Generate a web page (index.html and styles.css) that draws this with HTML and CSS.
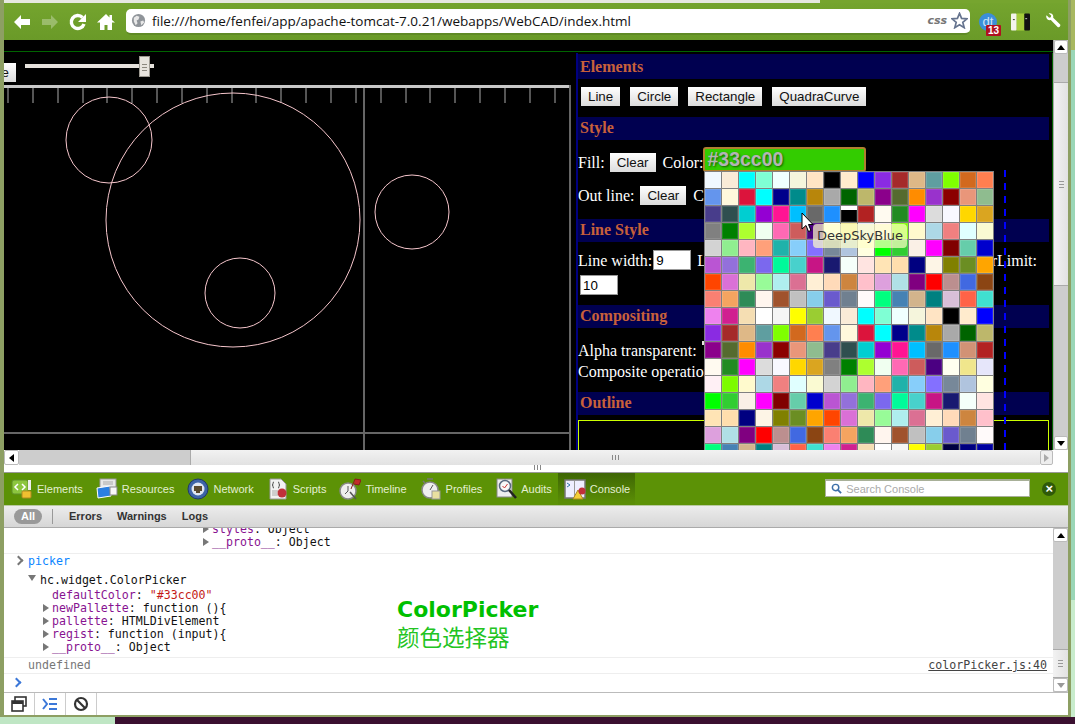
FILE: index.html
```html
<!DOCTYPE html>
<html>
<head>
    <title>WebCAD</title>
    <link rel="stylesheet" href="styles.css">
</head>
<body>
<div class="desktop">
<div class="window">
    <div class="tabstrip"></div>
    <div class="toolbar">
        <svg class="nav-icon" viewBox="0 0 20 20"><path d="M9 3 2 10l7 7v-4h9V7H9z" fill="#fff"/></svg>
        <svg class="nav-icon is-faded" viewBox="0 0 20 20"><path d="M11 3l7 7-7 7v-4H2V7h9z" fill="#fff"/></svg>
        <svg class="nav-icon" viewBox="0 0 20 20"><path d="M16 12a6.500 6.500 0 1 1-1.500-6.500" fill="none" stroke="#fff" stroke-width="3.400"/><path d="M18 2v8h-8z" fill="#fff"/></svg>
        <svg class="nav-icon" viewBox="0 0 20 20"><path d="M10 2 1 10.500h3V18h4.500v-5h3v5H16v-7.500h3L16 8V3h-2.500v2.500z" fill="#fff"/></svg>
        <div class="omnibox">
            <svg class="globe" viewBox="0 0 16 16"><circle cx="8" cy="8" r="7" fill="#8f9499"/><path d="M3 5l3-2 3 1-1 3-2 1 1 3-2 2-2-4zM10 9l3-1 1 2-3 3z" fill="#e8e8e8"/></svg>
            <span class="url">file:///home/fenfei/app/apache-tomcat-7.0.21/webapps/WebCAD/index.html</span>
            <span class="css-badge">css</span>
            <svg class="star" viewBox="0 0 18 18"><path d="M9 1.500 11.200 6.800 17 7.200 12.500 11 14 16.600 9 13.600 4 16.600 5.500 11 1 7.200 6.800 6.800z" fill="#fff" stroke="#66748f" stroke-width="1.800"/></svg>
        </div>
        <div class="ext-dt"><span class="dt-text">dt</span><span class="dt-badge">13</span></div>
        <svg class="ext-card" viewBox="0 0 20 20"><rect x="0" y="1" width="6" height="18" rx="1" fill="#f4f4ec"/><rect x="6" y="1" width="8" height="18" fill="#a4cc3a"/><rect x="14" y="1" width="6" height="18" rx="1" fill="#111"/><rect x="2" y="7" width="2" height="1" fill="#333"/><rect x="15" y="6" width="2" height="1" fill="#ccc"/></svg>
        <svg class="wrench" viewBox="0 0 20 20"><path d="M3 2.500 6 5.500l2-.5.500-2L5.500.5C9-.5 11.500 2 10.800 5.500L19 13.500c1 1.500-1.500 4-3 3L8 8.300C4.500 9 1.500 6 3 2.500z" fill="#fff"/></svg>
    </div>

    <div class="viewport">
        <div class="page">
            <div class="page-top"></div>
            <div class="page-body">
                <div class="drawing">
                    <div class="slider-row">
                        <button class="btn btn-cut">Save</button>
                        <div class="slider"><div class="slider-thumb"></div></div>
                    </div>
                    <svg class="canvas" id="canvas" width="568" height="365" viewBox="0 85 568 365"></svg>
                </div>
                <div class="panel">
                    <h3 class="head head-first">Elements</h3>
                    <div class="row row-tools">
                        <button class="btn">Line</button>
                        <button class="btn">Circle</button>
                        <button class="btn">Rectangle</button>
                        <button class="btn">QuadraCurve</button>
                    </div>
                    <h3 class="head head-style">Style</h3>
                    <div class="row row-fill">
                        <span class="fill-label">Fill:</span><button class="btn">Clear</button><span>Color:</span>
                        <input class="color-input" type="text" value="#33cc00">
                    </div>
                    <div class="row row-outline">
                        <span class="outline-label">Out line:</span><button class="btn">Clear</button><span>Color:</span>
                    </div>
                    <h3 class="head head-line">Line Style</h3>
                    <div class="row row-width">
                        <span>Line width:</span><input class="num-input" type="text" value="9">
                        <span>Line cap:</span><span class="miter">MiterLimit:</span>
                    </div>
                    <div class="row row-miter"><input class="num-input" type="text" value="10"></div>
                    <h3 class="head head-comp">Compositing</h3>
                    <div class="text-row text-row-first">Alpha transparent: <span class="alpha-bit"></span></div>
                    <div class="text-row">Composite operation:</div>
                    <h3 class="head head-outline">Outline</h3>
                    <div class="outline-box"></div>
                </div>
            </div>
            <div class="dash-line"></div>
            <div class="palette" id="palette"></div>
            <svg class="cursor" viewBox="0 0 13 21"><path d="M1 1v16l4-3.500 2.500 6 2.500-1-2.500-6H12z" fill="#fff" stroke="#000"/></svg>
            <div class="tip">DeepSkyBlue</div>
        </div>
        <div class="vscroll">
            <div class="sb-btn"><i class="arrow-up"></i></div>
            <div class="sb-track sb-top"></div>
            <div class="sb-thumb"><i class="grip"></i></div>
            <div class="sb-track sb-fill"></div>
            <div class="sb-btn"><i class="arrow-down"></i></div>
        </div>
    </div>

    <div class="hscroll">
        <div class="hs-btn"><i class="arrow-left"></i></div>
        <div class="hs-track"></div>
        <div class="hs-thumb"><i class="hgrip"></i></div>
        <div class="hs-btn hs-end"><i class="arrow-right"></i></div>
    </div>
    <div class="resizer"><i class="hgrip"></i></div>

    <div class="dev-tabs">
        <div class="tab"><svg viewBox="0 0 22 22"><rect x="1" y="2" width="16" height="14" rx="2" fill="#8cc63f" stroke="#5f8f2a"/><path d="M7 6 4 9l3 3M11 6l3 3-3 3" fill="none" stroke="#fff" stroke-width="1.500"/><rect x="17" y="2" width="3" height="10" fill="#eee"/><rect x="11" y="13" width="9" height="7" rx="1" fill="#f0c030" stroke="#b08a20"/></svg><span>Elements</span></div>
        <div class="tab"><svg viewBox="0 0 22 22"><rect x="4" y="1" width="16" height="13" fill="#e8e8e8" stroke="#999"/><path d="M7 4h10M7 6h10" stroke="#aaa"/><path d="M1 10l13-2 1 10-13 2z" fill="#2b7fe0" stroke="#fff"/><rect x="14" y="9" width="7" height="8" fill="#f8f8f8" stroke="#888"/></svg><span>Resources</span></div>
        <div class="tab"><svg viewBox="0 0 22 22"><circle cx="11" cy="11" r="10" fill="#3d64a8" stroke="#22386a"/><circle cx="11" cy="11" r="6.500" fill="#dfe6f2"/><path d="M7 8h8v5h-2v2H9v-2H7z" fill="#5a4a30"/></svg><span>Network</span></div>
        <div class="tab"><svg viewBox="0 0 22 22"><path d="M3 1h11l5 5v15H3z" fill="#f2f2f2" stroke="#999"/><path d="M7 4C5 4 7 7 5 7c2 0 0 3 2 3M11 4c2 0 0 3 2 3-2 0 0 3-2 3" fill="none" stroke="#444"/><path d="M5 13h6M5 15h5M5 17h6" stroke="#aaa"/><circle cx="15" cy="15" r="4.500" fill="#c0313a"/></svg><span>Scripts</span></div>
        <div class="tab"><svg viewBox="0 0 22 22"><circle cx="9" cy="13" r="8" fill="#eee" stroke="#888" stroke-width="1.500"/><path d="M9 8v5l-3 3" fill="none" stroke="#555"/><path d="M12 11 16 1M16 1l6 1-2 5-5-1" fill="#c22a2a" stroke="#8a1b1b"/><path d="M11 14l6 7" stroke="#555" stroke-width="1.500"/></svg><span>Timeline</span></div>
        <div class="tab"><svg viewBox="0 0 22 22"><circle cx="10" cy="12" r="8" fill="#efefef" stroke="#888" stroke-width="1.500"/><path d="M10 12 13 7" stroke="#555"/><path d="M7 1h6M3 3l2 2" stroke="#777" stroke-width="1.500"/><rect x="12" y="13" width="8" height="8" fill="#e8e0a0" stroke="#999"/></svg><span>Profiles</span></div>
        <div class="tab"><svg viewBox="0 0 22 22"><rect x="2" y="1" width="15" height="18" fill="#eee" stroke="#888"/><circle cx="10" cy="8" r="5.500" fill="#f8f8f8" stroke="#5a6a80" stroke-width="1.500"/><path d="M7.500 8l2 2 3-4" fill="none" stroke="#c33"/><path d="M14 12l7 8" stroke="#222" stroke-width="2.500"/></svg><span>Audits</span></div>
        <div class="tab tab-active"><svg viewBox="0 0 22 22"><rect x="1" y="2" width="20" height="18" fill="#eef" stroke="#777" stroke-width="1.500"/><path d="M3 5l3 2-3 2" fill="none" stroke="#37a"/><rect x="10" y="3" width="1" height="16" fill="#999"/><path d="M9 21l5-9 5 9z" fill="#f4cf3a" stroke="#b08a20"/><circle cx="18" cy="13" r="3.500" fill="#c0313a"/></svg><span>Console</span></div>
        <div class="search">
            <svg viewBox="0 0 12 12"><circle cx="5" cy="5" r="3.500" fill="none" stroke="#3c6fa8" stroke-width="1.600"/><path d="M7.500 7.500 11 11" stroke="#3c6fa8" stroke-width="2"/></svg>
            <span>Search Console</span>
        </div>
        <div class="dev-close">×</div>
    </div>

    <div class="dev-filter">
        <span class="pill">All</span>
        <span class="filter-sep"></span>
        <span class="filter">Errors</span>
        <span class="filter">Warnings</span>
        <span class="filter">Logs</span>
    </div>

    <div class="dev-console">
        <div class="log">
            <div class="msg msg-clip">
                <div class="prop closed"><span class="key">styles</span>: Object</div>
                <div class="prop closed"><span class="key">__proto__</span>: Object</div>
            </div>
            <div class="msg msg-object">
                <div class="input-line">picker</div>
                <div class="object-title">hc.widget.ColorPicker</div>
                <div class="member"><span class="key">defaultColor</span>: <span class="str">"#33cc00"</span></div>
                <div class="member closed"><span class="key">newPallette</span>: function (){</div>
                <div class="member closed"><span class="key">pallette</span>: HTMLDivElement</div>
                <div class="member closed"><span class="key">regist</span>: function (input){</div>
                <div class="member closed"><span class="key">__proto__</span>: Object</div>
                <div class="note">
                    <div class="note-title">ColorPicker</div>
                    <div class="note-sub">颜色选择器</div>
                </div>
            </div>
            <div class="msg msg-result">
                <span>undefined</span>
                <span class="src-link">colorPicker.js:40</span>
            </div>
            <div class="prompt"></div>
        </div>
        <div class="vscroll vscroll-dev">
            <div class="sb-btn"><i class="arrow-up"></i></div>
            <div class="sb-track sb-fill"></div>
            <div class="sb-thumb sb-thumb-dev"><i class="grip"></i></div>
            <div class="sb-btn"><i class="arrow-down arrow-light"></i></div>
        </div>
    </div>

    <div class="dev-status">
        <div class="status-btn"><svg viewBox="0 0 16 16"><rect x="4" y="1" width="11" height="9" fill="none" stroke="#333" stroke-width="1.600"/><rect x="1" y="5" width="11" height="10" fill="#fff" stroke="#333" stroke-width="1.600"/><rect x="1" y="5" width="11" height="3" fill="#333"/></svg></div>
        <div class="status-btn"><svg viewBox="0 0 16 16"><path d="M1 3l4 5-4 5" fill="none" stroke="#3c78d8" stroke-width="2"/><path d="M7 3h8M7 8h8M7 13h8" stroke="#3c78d8" stroke-width="2"/></svg></div>
        <div class="status-btn"><svg viewBox="0 0 16 16"><circle cx="8" cy="8" r="6" fill="none" stroke="#333" stroke-width="2.200"/><path d="M3.800 3.800l8.400 8.400" stroke="#333" stroke-width="2.200"/></svg></div>
    </div>
</div>
<div class="desktop-foot"><div class="foot-mint"></div><div class="foot-plum"></div></div>
</div>

<script>
var names = [
  'aliceblue','antiquewhite','aqua','aquamarine','azure','beige','bisque','black','blanchedalmond','blue','blueviolet','brown','burlywood','cadetblue','chartreuse','chocolate','coral',
  'cornflowerblue','cornsilk','crimson','cyan','darkblue','darkcyan','darkgoldenrod','darkgray','darkgreen','darkkhaki','darkmagenta','darkolivegreen','darkorange','darkorchid','darkred','darksalmon','darkseagreen',
  'darkslateblue','darkslategray','darkturquoise','darkviolet','deeppink','deepskyblue','dimgray','dodgerblue','#d19275','firebrick','floralwhite','forestgreen','fuchsia','gainsboro','ghostwhite','gold','goldenrod',
  'gray','green','greenyellow','honeydew','hotpink','indianred','indigo','ivory','khaki','lavender','lavenderblush','lawngreen','lemonchiffon','lightblue','lightcoral','lightcyan','lightgoldenrodyellow',
  'lightgray','lightgreen','lightpink','lightsalmon','lightseagreen','lightskyblue','#8470ff','lightslategray','lightsteelblue','lightyellow','lime','limegreen','linen','magenta','maroon','mediumaquamarine','mediumblue',
  'mediumorchid','mediumpurple','mediumseagreen','mediumslateblue','mediumspringgreen','mediumturquoise','mediumvioletred','midnightblue','mintcream','mistyrose','moccasin','navajowhite','navy','oldlace','olive','olivedrab','orange',
  'orangered','orchid','palegoldenrod','palegreen','paleturquoise','palevioletred','papayawhip','peachpuff','peru','pink','plum','powderblue','purple','red','rosybrown','royalblue','saddlebrown',
  'salmon','sandybrown','seagreen','seashell','sienna','silver','skyblue','slateblue','slategray','snow','springgreen','steelblue','tan','teal','thistle','tomato','turquoise',
  'violet','#d02090','wheat','white','whitesmoke','yellow','yellowgreen'
];
var palette = document.getElementById('palette');
var colors = names.concat(names, ['#000040', '#000080', '#0000a0']);
colors.forEach(function(color, i) {
  var cell = document.createElement('div');
  cell.className = 'cell';
  cell.style.backgroundColor = color;
  // this one is drawn half hidden in the shot
  if (i === 42) cell.className = 'cell cell-odd';
  palette.appendChild(cell);
});

// ruler and shapes
var svgNS = 'http://www.w3.org/2000/svg';
var canvas = document.getElementById('canvas');
function add(tag, attrs) {
  var el = document.createElementNS(svgNS, tag);
  for (var k in attrs) el.setAttribute(k, attrs[k]);
  canvas.appendChild(el);
}
add('rect', {x: 0, y: 85, width: 566, height: 3, fill: '#c8c8c8'});
for (var x = 3; x < 566; x += 24.85) {
  add('rect', {x: Math.round(x), y: 88, width: 2, height: 15, fill: '#555'});
}
add('rect', {x: 359, y: 88, width: 2, height: 362, fill: '#666'});
add('rect', {x: 0, y: 432, width: 566, height: 2, fill: '#666'});
add('rect', {x: 565, y: 85, width: 2, height: 365, fill: '#666'});
var circles = [[105, 140, 43], [229, 220, 127], [408, 212, 37], [236, 293, 35]];
circles.forEach(function(c) {
  add('circle', {cx: c[0], cy: c[1], r: c[2], fill: 'none', stroke: '#f6c6cc', 'stroke-width': 1});
});
</script>
</body>
</html>
```

FILE: styles.css
```css
* { box-sizing: border-box; }

body {
    margin: 0;
    background: #3a1030;
    font-family: "Liberation Sans", Arial, sans-serif;
    overflow: hidden;
}

button { font-family: "Liberation Sans", Arial, sans-serif; }

.desktop {
    width: 1075px;
    height: 724px;
    background: linear-gradient(#a8b860 0, #a8b860 50px, #9ad6b6 50px, #9ad6b6 600px, #c8eccc 600px);
}

.window {
    width: 1071px;
    height: 717px;
    display: flex;
    flex-direction: column;
    background: #fff;
    border-left: 4px solid #8d9f63;
    border-right: 3px solid #8d9f63;
    border-bottom: 2px solid #8d9f63;
}

.desktop-foot { display: flex; height: 7px; }
.foot-mint { width: 115px; background: #bfe6c4; }
.foot-plum { flex: 1; background: #3a1030; }

/* browser toolbar */
.tabstrip {
    height: 3px;
    background: linear-gradient(90deg, #e6e8e0 0, #e6e8e0 816px, #76a52f 816px);
}

.toolbar {
    height: 37px;
    display: flex;
    align-items: center;
    padding-left: 8px;
    background: linear-gradient(#74a42e, #6a9a28);
}

.nav-icon { width: 20px; height: 20px; margin-right: 8px; flex: none; }
.nav-icon.is-faded { opacity: .3; }

.omnibox {
    width: 844px;
    height: 26px;
    margin-left: 2px;
    display: flex;
    align-items: center;
    padding: 0 2px 0 5px;
    background: #fff;
    border-radius: 5px;
    border-bottom: 2px solid #5f8a25;
}

.globe { width: 15px; height: 15px; margin-right: 6px; flex: none; }
.url { font-family: "Open Sans", sans-serif; font-size: 13.500px; color: #111; flex: 1; white-space: nowrap; }
.css-badge { font-family: "DejaVu Sans", sans-serif; font-size: 11px; font-style: italic; font-weight: bold; color: #777; margin-right: 4px; }
.star { width: 17px; height: 17px; flex: none; }

.ext-dt { position: relative; width: 18px; height: 18px; margin-left: 9px; border-radius: 50%; background: #3c8ed8; flex: none; }
.dt-text { display: block; text-align: center; font-size: 13px; line-height: 17px; color: #cfe4f7; }
.dt-badge { position: absolute; left: 7px; top: 12px; width: 15px; height: 11px; background: #b01020; color: #fff; font-size: 10px; font-weight: bold; line-height: 11px; text-align: center; border-radius: 1px; }
.ext-card { width: 19px; height: 20px; margin-left: 14px; flex: none; }
.wrench { width: 17px; height: 17px; margin-left: 14px; flex: none; }

/* page area */
.viewport { height: 410px; display: flex; }

.page {
    width: 1049px;
    position: relative;
    overflow: hidden;
    background: #000;
}

.page-top { height: 12px; border-bottom: 1px solid #006400; }
.page-body { display: flex; height: 398px; }

.drawing { width: 572px; flex: none; }
.slider-row { height: 33px; display: flex; overflow: hidden; }
.slider-row .btn-cut { margin: 11px 0 0 -26px; width: 38px; padding: 0 7px 0 0; text-align: right; flex: none; }
.slider { position: relative; width: 129px; height: 4px; margin: 12px 0 0 9px; background: #e6e2dc; }
.slider-thumb { position: absolute; left: 114px; top: -8px; width: 11px; height: 21px; background: repeating-linear-gradient(#e8e4de 0, #e8e4de 2px, #8c887f 2px, #8c887f 3px) center / 5px 9px no-repeat, #e8e4de; border: 1px solid #9c9890; }
.canvas { display: block; margin-top: 0; }

.panel {
    width: 477px;
    flex: none;
    margin-top: 1px;
    padding-top: 1px;
    padding-right: 3px;
    border-top: 0;
    border-left: 2px solid #000080;
    border-right: 1px solid #006400;
    color: #fff;
    font-family: "Liberation Serif", serif;
    font-size: 16px;
    background: #000;
}

.head {
    margin: 0;
    height: 23px;
    line-height: 21px;
    padding-left: 2px;
    font-size: 16px;
    color: #c8603a;
    background: #000050;
}

.head-first { height: 25px; line-height: 25px; }
.head-style { margin-top: 11px; }
.head-line { margin-top: 14px; }
.head-comp { margin-top: 10px; }
.head-outline { margin-top: 9px; }

.row { display: flex; align-items: center; white-space: nowrap; }
.row-tools { margin: 8px 0 0 3px; gap: 10px; }
.row-fill { margin-top: 13px; height: 19px; gap: 7px; }
.row-outline { margin-top: 14px; height: 19px; gap: 7px; }
.fill-label { margin-right: -2px; }
.outline-label { margin-right: -1px; }
.row-width { margin-top: 8px; height: 20px; gap: 0; }
.row-width span { padding-top: 2px; }
.row-width .num-input { margin: 0 6px 0 1px; }
.row-miter { margin: 5px 0 0 2px; height: 20px; }
.miter { margin-left: auto; padding-right: 12px; }

.btn {
    height: 19px;
    padding: 0 7px;
    border: none;
    font-size: 13.330px;
    color: #111;
    background: linear-gradient(#fff, #dcdcdc);
}

.color-input {
    width: 163px;
    height: 25px;
    margin: -6px 0 0 -7px;
    padding: 0 0 0 2px;
    border: 2px solid #b08030;
    border-radius: 3px;
    background: #33cc00;
    color: #b4b4b4;
    font-family: "Liberation Sans", sans-serif;
    font-size: 19.500px;
    font-weight: bold;
    text-shadow: 1px 1px 2px #146600;
}

.num-input {
    width: 38px;
    height: 20px;
    padding: 0 2px;
    border: 1px solid #999;
    font-family: "Liberation Sans", sans-serif;
    font-size: 13.330px;
    background: #fff;
}

.text-row { height: 21px; line-height: 21px; white-space: nowrap; }
.text-row-first { margin-top: 12px; }
.alpha-bit { display: inline-block; width: 4px; height: 4px; margin: 0 0 11px 1px; background: #e8e4de; }
.head-outline { margin-top: 10px; }
.outline-box { height: 60px; margin: 5px 0 0 0; border: 1px solid #ccff00; }

/* things on top of the page */
.dash-line {
    position: absolute;
    left: 1000px;
    top: 130px;
    width: 2px;
    height: 280px;
    background: repeating-linear-gradient(#0000ff 0, #0000ff 7px, transparent 7px, transparent 13px);
}

.palette {
    position: absolute;
    left: 700px;
    top: 131px;
    display: grid;
    grid-template-columns: repeat(17, 16px);
    grid-auto-rows: 16px;
    gap: 1px;
    padding: 1px;
    background: #808080;
}

.cell { box-shadow: inset 0 0 0 1px rgba(255, 255, 255, .12); }
.cell-odd { background: linear-gradient(#fff 0, #fff 4px, #000 4px) !important; }

.cursor { position: absolute; left: 797px; top: 172px; width: 13px; height: 21px; }

.tip {
    position: absolute;
    left: 809px;
    top: 184px;
    width: 94px;
    height: 24px;
    padding-left: 4px;
    border-radius: 4px;
    background: rgba(255, 255, 200, .7);
    font-family: "DejaVu Sans", sans-serif;
    font-size: 13px;
    line-height: 24px;
    color: #333;
    white-space: nowrap;
}

/* scrollbars */
.vscroll { width: 15px; display: flex; flex-direction: column; flex: none; border-left: 1px solid #aaa; background: #ccc; }
.sb-btn { height: 14px; background: #fff; border: 1px solid #bbb; border-radius: 2px; display: flex; align-items: center; justify-content: center; flex: none; }
.sb-top { height: 28px; flex: none; }
.sb-fill { flex: 1; }
.sb-track { background: #cdcdcd; }
.sb-thumb { height: 204px; flex: none; display: flex; align-items: center; justify-content: center; background: linear-gradient(90deg, #f2f2f2, #e2e2e2); border-top: 1px solid #aaa; border-bottom: 1px solid #aaa; }
.sb-thumb-dev { height: 29px; }
.grip { display: block; width: 5px; height: 7px; background: repeating-linear-gradient(#999 0, #999 1px, transparent 1px, transparent 3px); }
.hgrip { display: block; width: 7px; height: 5px; background: repeating-linear-gradient(90deg, #888 0, #888 1px, transparent 1px, transparent 3px); }

.arrow-up { border: 4px solid transparent; border-top: 0; border-bottom: 5px solid #000; }
.arrow-down { border: 4px solid transparent; border-bottom: 0; border-top: 5px solid #000; }
.arrow-light { border-top-color: #999; }
.arrow-left { border: 4px solid transparent; border-left: 0; border-right: 5px solid #000; }
.arrow-right { border: 4px solid transparent; border-right: 0; border-left: 5px solid #aaa; }

.hscroll { height: 15px; display: flex; background: #fff; flex: none; }
.hs-btn { width: 15px; background: #fff; border: 1px solid #bbb; border-radius: 2px; display: flex; align-items: center; justify-content: center; flex: none; }
.hs-track { width: 171px; background: #cdcdcd; flex: none; }
.hs-thumb { width: 850px; display: flex; align-items: center; justify-content: center; background: linear-gradient(#f2f2f2, #e2e2e2); border-left: 1px solid #aaa; }
.hs-end { width: 13px; background: #eee; }

.resizer { height: 8px; display: flex; justify-content: center; padding: 0 0 0 3px; background: #fff; border-bottom: 1px solid #999; flex: none; }

/* devtools */
.dev-tabs {
    height: 33px;
    display: flex;
    align-items: stretch;
    padding-left: 7px;
    background: #5c9206;
    border-bottom: 1px solid #b9c9a0;
    flex: none;
}

.tab {
    display: flex;
    align-items: center;
    gap: 4px;
    padding: 0 4px 0 0;
    margin-right: 9px;
    font-size: 11px;
    color: #e4efd2;
}

.tab svg { width: 22px; height: 22px; flex: none; }

.tab-active {
    margin-left: -7px;
    padding: 0 5px 0 6px;
    margin-right: 0;
    background: linear-gradient(#3e6604, #5a8d06 90%);
}

.search {
    width: 205px;
    height: 18px;
    margin: 6px 0 0 190px;
    display: flex;
    align-items: center;
    gap: 4px;
    padding-left: 5px;
    background: #fff;
    border: 1px solid #a8b098;
    border-top: 2px solid #a8b098;
    font-size: 11px;
    color: #aaa;
}

.search svg { width: 11px; height: 11px; }

.dev-close {
    width: 14px;
    height: 14px;
    margin: 9px 0 0 12px;
    border-radius: 50%;
    background: #2f5a08;
    color: #fff;
    font-size: 13px;
    font-weight: bold;
    line-height: 14px;
    text-align: center;
}

.dev-filter {
    height: 22px;
    display: flex;
    align-items: center;
    padding: 0 0 1px 10px;
    background: linear-gradient(#ececec, #d6d6d6);
    border-bottom: 1px solid #aaa;
    font-size: 11px;
    font-weight: bold;
    color: #333;
    flex: none;
}

.pill { width: 28px; height: 15px; border-radius: 8px; background: #999; color: #fff; text-align: center; line-height: 15px; }
.filter-sep { width: 1px; height: 15px; margin: 0 16px 0 10px; background: #999; }
.filter { margin-right: 15px; }

.dev-console { height: 165px; display: flex; flex: none; border-bottom: 1px solid #bbb; }

.log {
    flex: 1;
    overflow: hidden;
    font-family: "DejaVu Sans Mono", monospace;
    font-size: 11.600px;
    line-height: 13px;
    color: #111;
    background: #fff;
}

.msg { border-bottom: 1px solid #eee; }
.msg-clip { margin-top: -5px; padding: 0 0 3px 208px; height: 31px; }
.key { color: #881391; }
.str { color: #c41a16; }

.closed { position: relative; }
.closed::before {
    content: "";
    position: absolute;
    left: -9px;
    top: 2px;
    border: 4px solid transparent;
    border-right: 0;
    border-left: 6px solid #777;
}

.msg-object { position: relative; height: 104px; padding-left: 24px; }

.input-line { position: relative; height: 19px; line-height: 14px; color: #0a84ff; }
.input-line::before {
    content: "";
    position: absolute;
    left: -13px;
    top: 3px;
    width: 5px;
    height: 5px;
    border-top: 2px solid #777;
    border-right: 2px solid #777;
    transform: rotate(45deg);
}

.object-title { position: relative; padding-left: 12px; height: 16px; line-height: 14px; }
.object-title::before {
    content: "";
    position: absolute;
    left: 0;
    top: 2px;
    border: 4px solid transparent;
    border-bottom: 0;
    border-top: 6px solid #777;
}

.member { margin-left: 24px; }

.note { position: absolute; left: 393px; top: 42px; }
.note-title { font-family: "DejaVu Sans", sans-serif; font-size: 22px; font-weight: bold; line-height: 27px; color: #00c000; }
.note-sub { font-family: "DejaVu Sans", "Noto Sans CJK SC", sans-serif; font-size: 22.500px; line-height: 30px; color: #22c422; }

.msg-result { height: 16px; padding: 1px 6px 0 24px; display: flex; justify-content: space-between; color: #777; }
.src-link { color: #444; text-decoration: underline; }

.prompt { position: relative; height: 18px; }
.prompt::before {
    content: "";
    position: absolute;
    left: 9px;
    top: 5px;
    width: 5px;
    height: 5px;
    border-top: 2px solid #3c78d8;
    border-right: 2px solid #3c78d8;
    transform: rotate(45deg);
}

.vscroll-dev { border-left: 0; }

.dev-status { height: 22px; display: flex; background: #fff; flex: none; }
.status-btn { width: 31px; display: flex; align-items: center; justify-content: center; border-right: 1px solid #ccc; }
.status-btn svg { width: 16px; height: 16px; }
```
